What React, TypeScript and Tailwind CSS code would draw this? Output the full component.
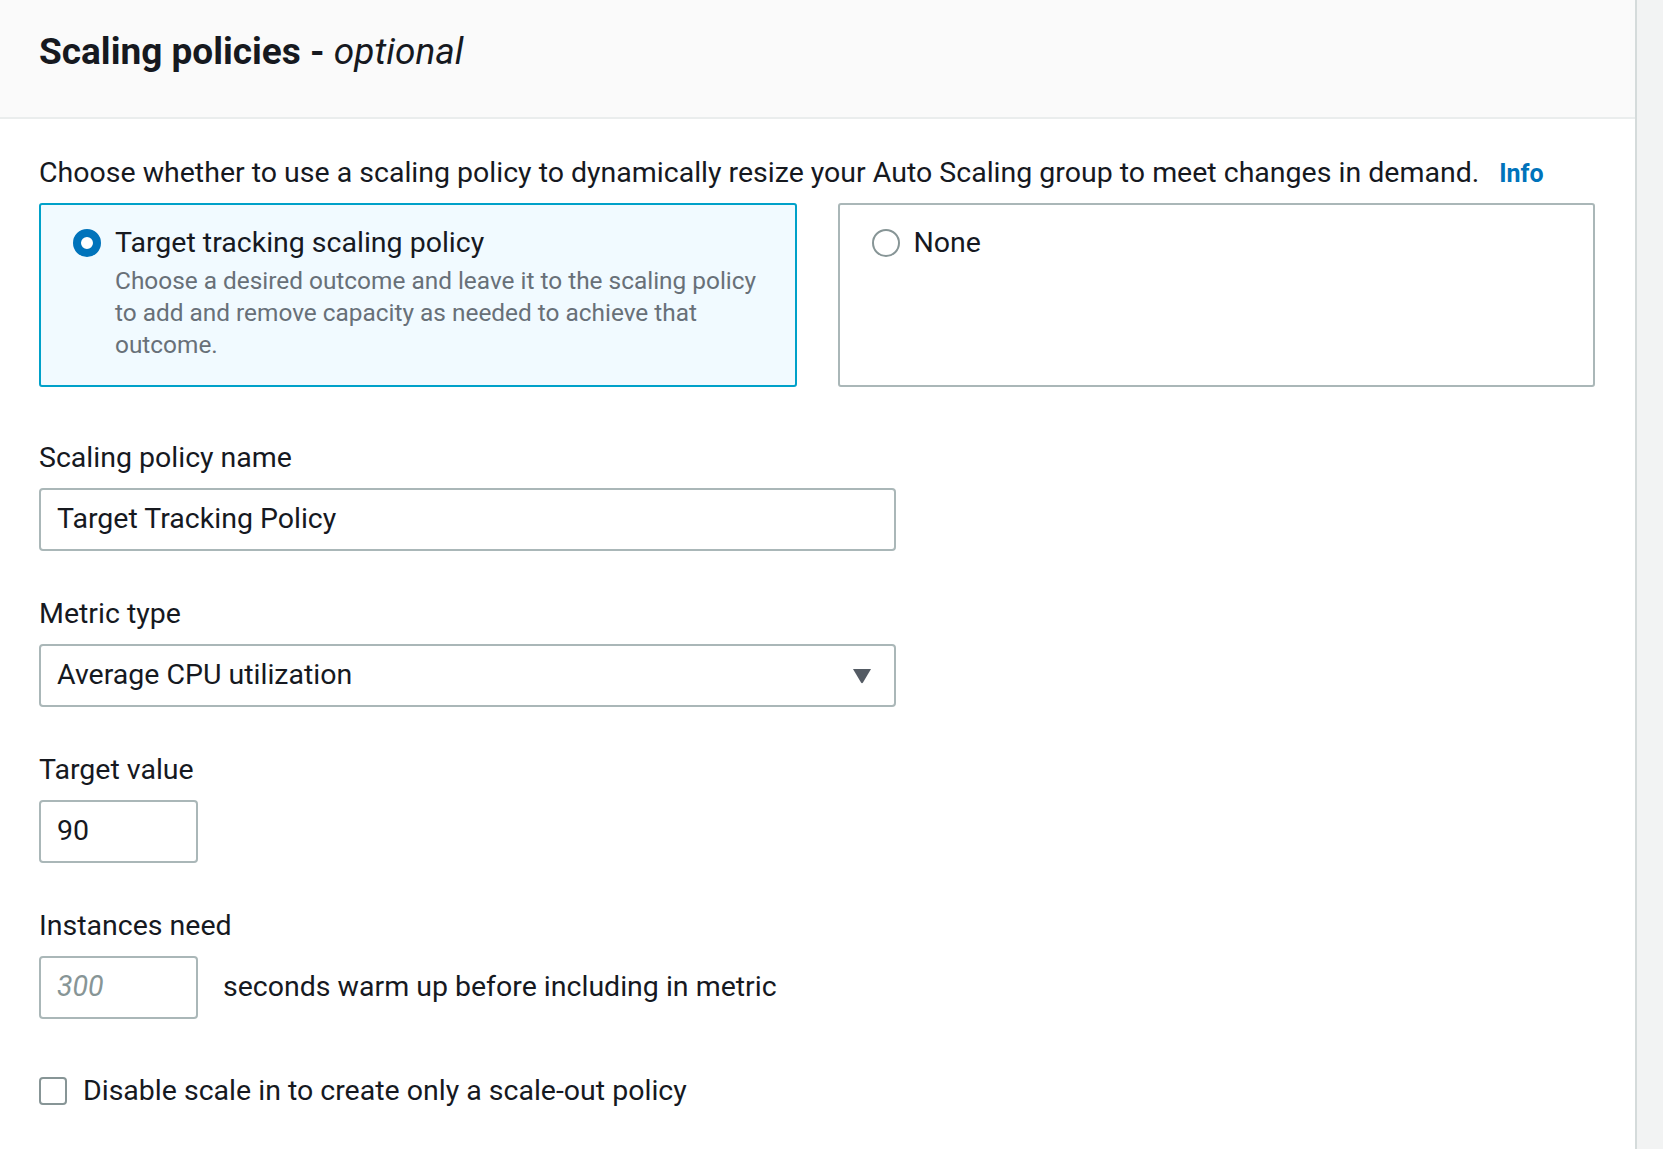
import React from 'react';

const font = { fontFamily: 'Roboto, "Noto Sans", sans-serif' };

const Label: React.FC<{ children: React.ReactNode; className?: string }> = ({ children, className }) => (
  <div className={`text-[28.5px] leading-[32px] text-[#16191f] ${className ?? ''}`}>{children}</div>
);

const TextBox: React.FC<{ value: string; width: string; placeholder?: boolean }> = ({ value, width, placeholder }) => (
  <div
    className={`${width} h-[63px] flex items-center px-[16px] border-2 border-[#aab7b8] rounded-[4px] bg-white text-[28.5px] ${
      placeholder ? 'italic text-[#879596]' : 'text-[#16191f]'
    }`}
  >
    {value}
  </div>
);

export default function App() {
  return (
    <div className="flex min-h-[1149px] w-full bg-[#f2f3f3]" style={font}>
      <div className="w-[1637px] shrink-0 bg-white border-r-2 border-[#d5dbdb]">
        <div className="h-[119px] bg-[#fafafa] border-b-2 border-[#eaeded] px-[39px] pt-[31px]">
          <h2 className="text-[37px] leading-[42px] font-bold text-[#16191f]">
            Scaling policies - <em className="font-normal italic">optional</em>
          </h2>
        </div>

        <div className="px-[39px] pt-[38px] pb-[40px]">
          <p className="text-[28.5px] leading-[32px] text-[#16191f]">
            Choose whether to use a scaling policy to dynamically resize your Auto Scaling group to meet changes in
            demand.<span className="ml-[20px] font-bold text-[#0073bb] text-[25px]">Info</span>
          </p>

          <div className="mt-[13px] grid grid-cols-2 gap-[41px] w-[1556px]">
            <div className="h-[184px] border-2 border-[#00a1c9] rounded-[3px] bg-[#f1faff] pl-[32px] pr-[16px] pt-[22px]">
              <div className="flex gap-[14px]">
                <span className="mt-[2px] w-[28px] h-[28px] shrink-0 rounded-full border-[8px] border-[#0073bb] bg-white" />
                <div>
                  <div className="text-[28.5px] leading-[32px] text-[#16191f]">Target tracking scaling policy</div>
                  <div className="mt-[6px] text-[24.4px] leading-[32px] text-[#687078] max-w-[652px]">
                    Choose a desired outcome and leave it to the scaling policy to add and remove capacity as needed to
                    achieve that outcome.
                  </div>
                </div>
              </div>
            </div>
            <div className="h-[184px] border-2 border-[#aab7b8] rounded-[3px] bg-white pl-[32px] pt-[22px]">
              <div className="flex gap-[14px]">
                <span className="mt-[2px] w-[28px] h-[28px] shrink-0 rounded-full border-2 border-[#879596] bg-white" />
                <div className="text-[28.5px] leading-[32px] text-[#16191f]">None</div>
              </div>
            </div>
          </div>

          <Label className="mt-[55px]">Scaling policy name</Label>
          <div className="mt-[14px]">
            <TextBox value="Target Tracking Policy" width="w-[857px]" />
          </div>

          <Label className="mt-[47px]">Metric type</Label>
          <div className="mt-[14px] w-[857px] h-[63px] flex items-center justify-between pl-[16px] pr-[22px] border-2 border-[#aab7b8] rounded-[4px] text-[28.5px] text-[#16191f]">
            <span>Average CPU utilization</span>
            <svg width="20" height="16" viewBox="0 0 20 16">
              <path d="M1 1 H19 L11 14.5 Q10 16 9 14.5 Z" fill="#545b64" />
            </svg>
          </div>

          <Label className="mt-[47px]">Target value</Label>
          <div className="mt-[14px]">
            <TextBox value="90" width="w-[159px]" />
          </div>

          <Label className="mt-[47px]">Instances need</Label>
          <div className="mt-[14px] flex items-center gap-[25px]">
            <TextBox value="300" width="w-[159px]" placeholder />
            <span className="text-[28.5px] text-[#16191f]">seconds warm up before including in metric</span>
          </div>

          <div className="mt-[56px] flex items-center gap-[16px]">
            <span className="w-[28px] h-[28px] border-2 border-[#879596] rounded-[4px] bg-white" />
            <span className="text-[28.5px] leading-[32px] text-[#16191f]">Disable scale in to create only a scale-out policy</span>
          </div>
        </div>
      </div>
    </div>
  );
}
